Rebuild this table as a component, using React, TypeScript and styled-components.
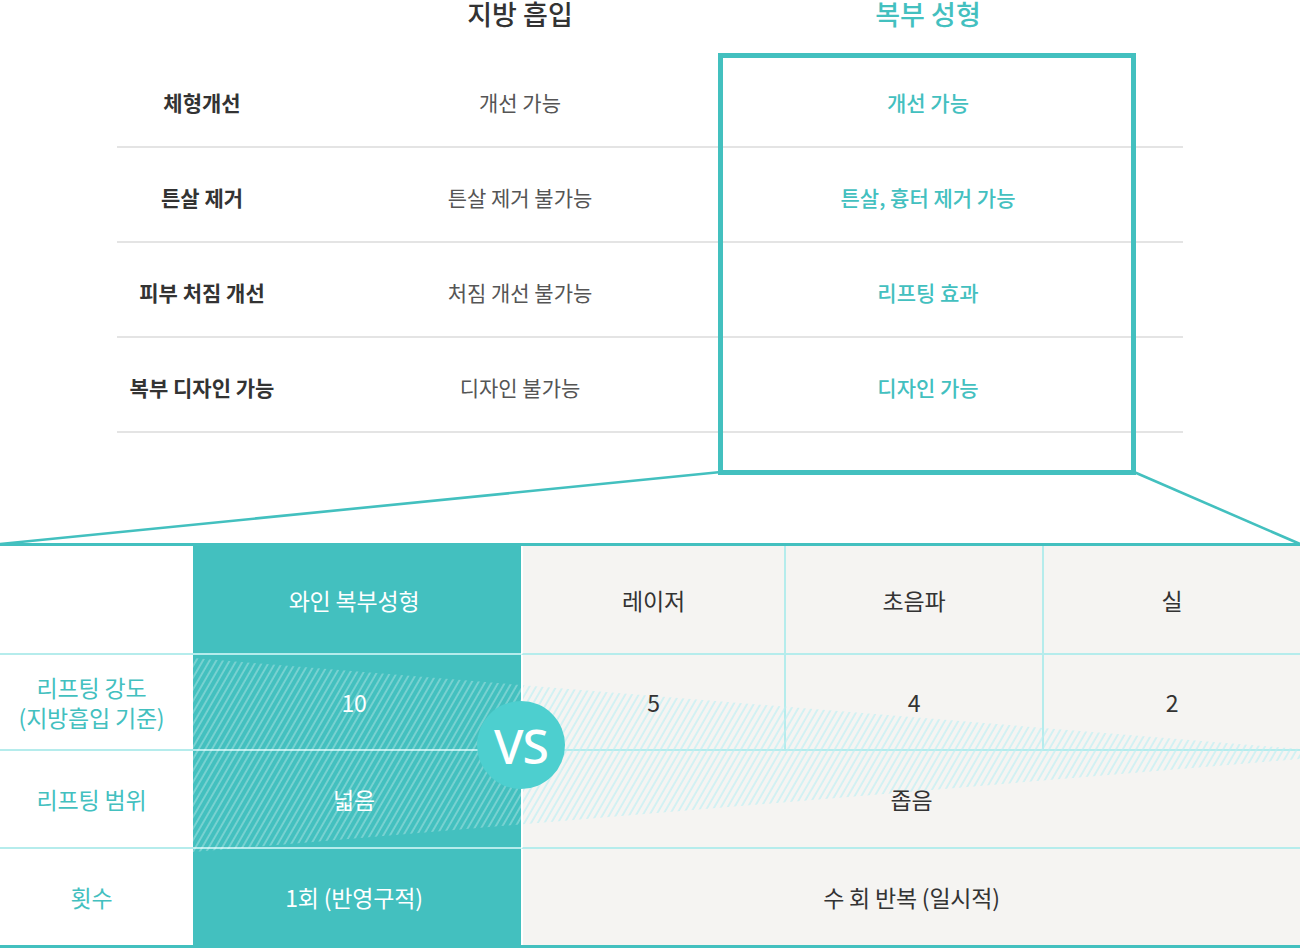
import { FC } from "react";
import styled, { createGlobalStyle, css } from "styled-components";

const TEAL = "#43c0bf";
const LINE = "#b5ecec";
const GRAY_BG = "#f5f4f2";

const GlobalStyle = createGlobalStyle`
  html, body {
    margin: 0;
    padding: 0;
    background: #fff;
  }
  body {
    font-family: "Noto Sans CJK KR", "Noto Sans", sans-serif;
    color: #333;
  }
`;

const topRows = [
  { label: "체형개선", lipo: "개선 가능", tummy: "개선 가능" },
  { label: "튼살 제거", lipo: "튼살 제거 불가능", tummy: "튼살, 흉터 제거 가능" },
  { label: "피부 처짐 개선", lipo: "처짐 개선 불가능", tummy: "리프팅 효과" },
  { label: "복부 디자인 가능", lipo: "디자인 불가능", tummy: "디자인 가능" },
];

const App: FC = () => {
  return (
    <Page>
      <GlobalStyle />

      <TopWrap>
        <HeadRow>
          <span />
          <Title>지방 흡입</Title>
          <Title $accent>복부 성형</Title>
        </HeadRow>
        {topRows.map((row) => (
          <TopRow key={row.label}>
            <RowLabel>{row.label}</RowLabel>
            <RowPlain>{row.lipo}</RowPlain>
            <RowAccent>{row.tummy}</RowAccent>
          </TopRow>
        ))}
        <Highlight />
      </TopWrap>

      <Connector>
        <svg width="1300" height="68" viewBox="0 0 1300 68">
          <line x1="721" y1="-3" x2="0" y2="69" stroke={TEAL} strokeWidth="2.6" />
          <line x1="1134" y1="-3" x2="1300" y2="69" stroke={TEAL} strokeWidth="2.6" />
        </svg>
      </Connector>

      <Compare>
        <Cell $kind="label" />
        <Cell $kind="wine"><CellText>와인 복부성형</CellText></Cell>
        <Cell $kind="other" $split><CellText>레이저</CellText></Cell>
        <Cell $kind="other" $divider><CellText>초음파</CellText></Cell>
        <Cell $kind="other" $divider><CellText>실</CellText></Cell>

        <Cell $kind="label">
          <CellText>리프팅 강도<br />(지방흡입 기준)</CellText>
        </Cell>
        <Cell $kind="wine"><CellText>10</CellText></Cell>
        <Cell $kind="other" $split><CellText>5</CellText></Cell>
        <Cell $kind="other" $divider><CellText>4</CellText></Cell>
        <Cell $kind="other" $divider><CellText>2</CellText></Cell>

        <Cell $kind="label"><CellText>리프팅 범위</CellText></Cell>
        <Cell $kind="wine"><CellText>넓음</CellText></Cell>
        <Cell $kind="other" $split $span><CellText>좁음</CellText></Cell>

        <Cell $kind="label" $last><CellText>횟수</CellText></Cell>
        <Cell $kind="wine" $last><CellText>1회 (반영구적)</CellText></Cell>
        <Cell $kind="other" $split $span $last><CellText>수 회 반복 (일시적)</CellText></Cell>

        <Hatch width="1300" height="402" viewBox="0 0 1300 402">
          <defs>
            <pattern id="hatchWhite" width="5.8" height="12" patternUnits="userSpaceOnUse" patternTransform="rotate(30)">
              <line x1="1" y1="0" x2="1" y2="12" stroke="#ffffff" strokeOpacity="0.45" strokeWidth="1.2" />
            </pattern>
            <pattern id="hatchCyan" width="5.8" height="12" patternUnits="userSpaceOnUse" patternTransform="rotate(30)">
              <line x1="1" y1="0" x2="1" y2="12" stroke="#bdeff3" strokeWidth="1.2" />
            </pattern>
            <clipPath id="wedge">
              <polygon points="193,112 1300,203 1300,213 193,306" />
            </clipPath>
          </defs>
          <g clipPath="url(#wedge)">
            <rect x="193" y="100" width="328" height="215" fill="url(#hatchWhite)" />
            <rect x="523" y="100" width="777" height="215" fill="url(#hatchCyan)" />
          </g>
        </Hatch>

        <Vs>VS</Vs>
      </Compare>
    </Page>
  );
};

export default App;

const Page = styled.div`
  width: 1300px;
  height: 948px;
  overflow: hidden;
  background: #fff;
`;

const TopWrap = styled.div`
  position: relative;
  width: 1066px;
  margin-left: 117px;
`;

const grid = css`
  display: grid;
  grid-template-columns: 170px 466px 350px 80px;
  align-items: center;
  justify-items: center;
`;

const HeadRow = styled.div`
  ${grid};
  height: 53px;
  align-items: start;
`;

const Title = styled.h2<{ $accent?: boolean }>`
  margin: 0;
  font-size: 27px;
  line-height: 28px;
  font-weight: 500;
  color: ${(p) => (p.$accent ? TEAL : "#333")};
`;

const TopRow = styled.div`
  ${grid};
  box-sizing: border-box;
  height: 95px;
  padding-top: 5px;
  border-bottom: 2px solid #e4e4e4;
  font-size: 21px;
`;

const RowLabel = styled.div`
  font-weight: 700;
  color: #333;
`;

const RowPlain = styled.div`
  font-weight: 400;
  color: #555;
`;

const RowAccent = styled.div`
  font-weight: 500;
  color: ${TEAL};
`;

const Highlight = styled.div`
  position: absolute;
  left: 601px;
  top: 53px;
  width: 418px;
  height: 422px;
  box-sizing: border-box;
  border: 5px solid ${TEAL};
  pointer-events: none;
`;

const Connector = styled.div`
  margin-top: 42px;
  height: 68px;

  svg {
    display: block;
    overflow: visible;
  }
`;

const Compare = styled.div`
  position: relative;
  display: grid;
  grid-template-columns: 193px 328px 263px 258px 258px;
  grid-template-rows: 109px 96px 98px 96px;
  border-top: 3px solid ${TEAL};
  border-bottom: 3px solid ${TEAL};
`;

type CellProps = {
  $kind: "label" | "wine" | "other";
  $split?: boolean;
  $divider?: boolean;
  $span?: boolean;
  $last?: boolean;
};

const Cell = styled.div<CellProps>`
  box-sizing: border-box;
  display: flex;
  align-items: center;
  justify-content: center;
  text-align: center;
  font-size: 23px;
  padding-right: ${(p) =>
    p.$kind === "label" ? "10px" : p.$kind === "wine" ? "6px" : "0"};
  background: ${(p) =>
    p.$kind === "wine" ? TEAL : p.$kind === "other" ? GRAY_BG : "#fff"};
  color: ${(p) =>
    p.$kind === "wine" ? "#fff" : p.$kind === "label" ? TEAL : "#333"};
  border-bottom: ${(p) => (p.$last ? "none" : `2px solid ${LINE}`)};
  border-left: ${(p) =>
    p.$split ? "2px solid #fff" : p.$divider ? `2px solid ${LINE}` : "none"};
  grid-column: ${(p) => (p.$span ? "span 3" : "auto")};
`;

const CellText = styled.span`
  position: relative;
  z-index: 2;
  line-height: 30px;
  letter-spacing: -0.2px;
`;

const Hatch = styled.svg`
  position: absolute;
  left: 0;
  top: 0;
  z-index: 1;
  pointer-events: none;
`;

const Vs = styled.div`
  position: absolute;
  left: 477px;
  top: 155px;
  z-index: 3;
  width: 88px;
  height: 88px;
  border-radius: 50%;
  background: #4dcfcf;
  color: #fff;
  display: flex;
  align-items: center;
  justify-content: center;
  font-family: "Noto Sans", "Noto Sans CJK KR", sans-serif;
  font-size: 48px;
  font-weight: 500;
  letter-spacing: -1px;
`;
